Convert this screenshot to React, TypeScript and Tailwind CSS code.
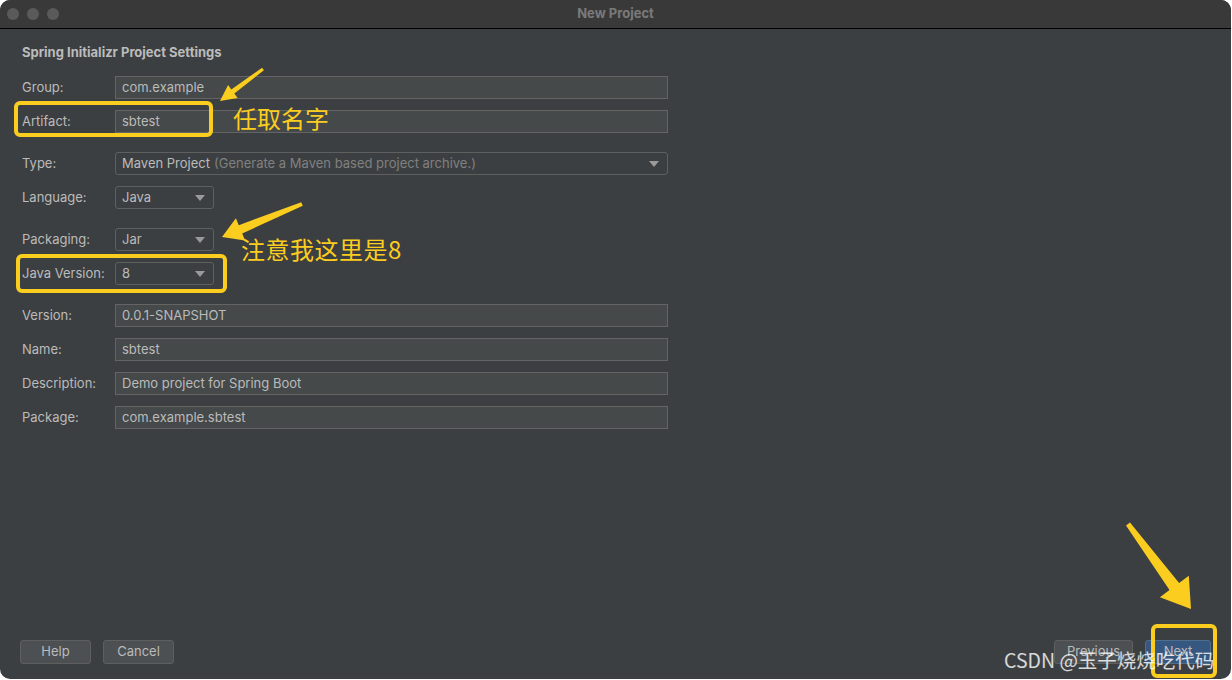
import React from 'react';

const FONT = { fontFamily: 'Inter, "Noto Sans", "Liberation Sans", sans-serif' };
const CJK = { fontFamily: '"Noto Sans CJK SC", "Noto Sans", sans-serif' };

function Field({ value }: { value: string }) {
  return (
    <div className="h-[23px] w-[553px] bg-[#45494a] border border-[#646464] px-[6px] flex items-center text-[13px] text-[#bbbbbb]">
      {value}
    </div>
  );
}

function Combo({ value, hint, wide }: { value: string; hint?: string; wide?: boolean }) {
  return (
    <div
      className={`h-[23px] ${wide ? 'w-[553px]' : 'w-[99px]'} bg-[#3c3f41] border border-[#5e6060] rounded-[3px] pl-[6px] pr-[8px] flex items-center text-[13px] text-[#bbbbbb]`}
    >
      <span>{value}</span>
      {hint && <span className="ml-1 text-[#808080]">{hint}</span>}
      <svg className="ml-auto" width="10" height="6" viewBox="0 0 10 6">
        <path d="M0 0 L10 0 L5 6 Z" fill="#9a9a9a" />
      </svg>
    </div>
  );
}

function Row({ label, children, extra }: { label: string; children: React.ReactNode; extra?: boolean }) {
  return (
    <div className={`flex items-center h-[23px] ${extra ? 'mt-[19px]' : 'mt-[11px]'}`}>
      <div className="w-[93px] text-[13px] text-[#bbbbbb]">{label}</div>
      {children}
    </div>
  );
}

function Button({ label, w, primary }: { label: string; w: string; primary?: boolean }) {
  return (
    <div
      className={`${w} h-[24px] rounded-[3px] border flex items-center justify-center text-[13px] ${
        primary ? 'bg-[#365880] border-[#4c708c] text-[#bbbbbb]' : 'bg-[#4c5052] border-[#5e6060] text-[#bbbbbb]'
      }`}
    >
      {label}
    </div>
  );
}

// arrow polygon: tail point -> tip, shaft tapering
function arrow(tx: number, ty: number, hx: number, hy: number, w0: number, w1: number, headLen: number, headW: number) {
  const dx = hx - tx, dy = hy - ty;
  const L = Math.hypot(dx, dy);
  const ux = dx / L, uy = dy / L;
  const nx = -uy, ny = ux;
  const bx = hx - ux * headLen, by = hy - uy * headLen;
  const pts = [
    [tx + nx * w0 / 2, ty + ny * w0 / 2],
    [bx + nx * w1 / 2, by + ny * w1 / 2],
    [bx + nx * headW / 2, by + ny * headW / 2],
    [hx, hy],
    [bx - nx * headW / 2, by - ny * headW / 2],
    [bx - nx * w1 / 2, by - ny * w1 / 2],
    [tx - nx * w0 / 2, ty - ny * w0 / 2],
  ];
  return pts.map((p) => p.map((v) => v.toFixed(1)).join(',')).join(' ');
}

export default function App() {
  const Y = '#fbcd1f';
  return (
    <div className="w-[1232px] h-[680px] bg-white relative overflow-hidden" style={FONT}>
      <div className="absolute left-0 top-0 w-[1231px] h-[679px] rounded-[10px] overflow-hidden bg-[#3c3f41] flex flex-col">
        {/* Title bar */}
        <div className="h-[28px] bg-[#3a3939] relative flex items-center justify-center border-b border-black box-content">
          <div className="absolute left-[7px] top-[8px] flex gap-[8px]">
            <div className="w-[12px] h-[12px] rounded-full bg-[#5a5a5a]" />
            <div className="w-[12px] h-[12px] rounded-full bg-[#5a5a5a]" />
            <div className="w-[12px] h-[12px] rounded-full bg-[#5a5a5a]" />
          </div>
          <span className="text-[13px] font-bold text-[#7a7a7a]">New Project</span>
        </div>

        {/* Body */}
        <div className="flex-1 flex flex-col pl-[22px]">
          <div className="mt-[15px] h-[16px] leading-[16px] text-[13px] font-bold text-[#bbbbbb]">
            Spring Initializr Project Settings
          </div>
          <div className="mt-[5px]">
            <Row label="Group:"><Field value="com.example" /></Row>
            <Row label="Artifact:"><Field value="sbtest" /></Row>
            <Row label="Type:" extra>
              <Combo wide value="Maven Project" hint="(Generate a Maven based project archive.)" />
            </Row>
            <Row label="Language:"><Combo value="Java" /></Row>
            <Row label="Packaging:" extra><Combo value="Jar" /></Row>
            <Row label="Java Version:"><Combo value="8" /></Row>
            <Row label="Version:" extra><Field value="0.0.1-SNAPSHOT" /></Row>
            <Row label="Name:"><Field value="sbtest" /></Row>
            <Row label="Description:"><Field value="Demo project for Spring Boot" /></Row>
            <Row label="Package:"><Field value="com.example.sbtest" /></Row>
          </div>
        </div>

        {/* Footer buttons */}
        <div className="h-[39px] flex items-start pl-[20px] pr-[20px]">
          <div className="flex gap-[12px]">
            <Button label="Help" w="w-[71px]" />
            <Button label="Cancel" w="w-[71px]" />
          </div>
          <div className="ml-auto flex gap-[12px]">
            <Button label="Previous" w="w-[79px]" />
            <Button label="Next" w="w-[66px]" primary />
          </div>
        </div>
      </div>

      {/* Annotations */}
      <div className="absolute left-[14px] top-[101px] w-[199px] h-[36px] rounded-[6px] border-[4px]" style={{ borderColor: Y }} />
      <div className="absolute left-[16px] top-[254px] w-[211px] h-[39px] rounded-[6px] border-[4px]" style={{ borderColor: Y }} />
      <div className="absolute left-[1151px] top-[624px] w-[66px] h-[54px] rounded-[6px] border-[4px]" style={{ borderColor: Y }} />

      <div className="absolute left-[233px] top-[101px] text-[24px] leading-[34px]" style={{ ...CJK, color: Y }}>任取名字</div>
      <div className="absolute left-[241px] top-[232px] text-[24px] leading-[34px] tracking-[0.5px]" style={{ ...CJK, color: Y }}>注意我这里是8</div>

      <svg className="absolute left-0 top-0 pointer-events-none" width="1232" height="680">
        <polygon points={arrow(263, 69, 220, 101, 3, 5, 16, 16)} fill={Y} />
        <polygon points={arrow(302, 204, 222, 237, 4, 9, 20, 24)} fill={Y} />
        <polygon points={arrow(1128, 524, 1191, 609, 5, 12, 28, 36)} fill={Y} />
      </svg>

      <div className="absolute left-[1004px] top-[646px] text-[19.5px] leading-[28px] text-white/80" style={CJK}>
        CSDN @玉子烧烧吃代码
      </div>
    </div>
  );
}
